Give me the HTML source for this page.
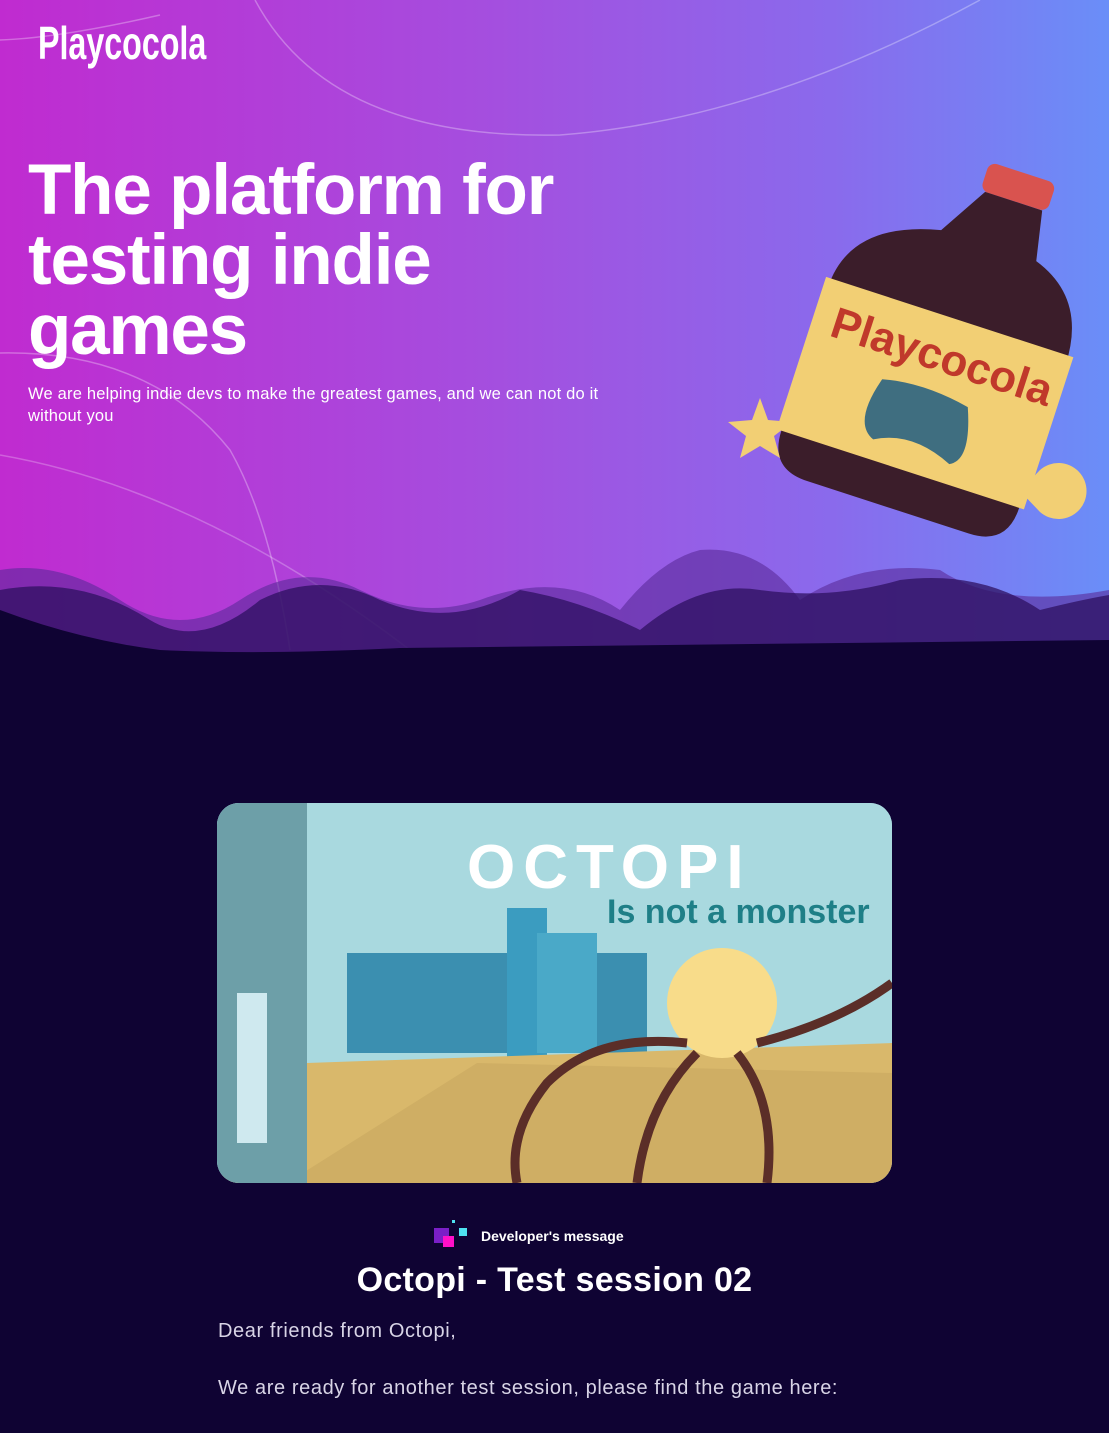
<!DOCTYPE html>
<html><head><meta charset="utf-8"><style>
*{margin:0;padding:0;box-sizing:border-box}
body{width:1109px;height:1433px;overflow:hidden;background:#0f0333;font-family:"Liberation Sans",sans-serif;position:relative}
.hero{position:absolute;left:0;top:0;width:1109px;height:660px;background:linear-gradient(90deg,#c02bd0 0%,#a44fdf 45%,#8a6aec 75%,#6a8ef8 100%)}
.logo{position:absolute;left:38px;top:16px;color:#fff;font-family:"Liberation Sans Narrow","Liberation Sans",sans-serif;font-size:46px;font-weight:bold;transform:scaleX(.7);transform-origin:left}
h1{position:absolute;left:28px;top:156px;color:#fff;font-size:71px;line-height:70px;font-weight:bold;letter-spacing:-1.2px;width:700px;white-space:nowrap}
.sub{position:absolute;left:28px;top:383px;color:#fff;font-size:16.5px;line-height:22px;width:600px;letter-spacing:.2px}
.card{position:absolute;left:217px;top:803px;width:675px;height:380px;border-radius:22px;overflow:hidden;background:#a9d9df}
.dm{position:absolute;left:481px;top:1228px;color:#fff;font-size:14px;font-weight:bold}
h2{position:absolute;left:0;width:1109px;text-align:center;top:1261px;color:#fff;font-size:34px;font-weight:bold;letter-spacing:.3px}
.p{position:absolute;left:218px;color:#d8d4e6;font-size:20px;letter-spacing:.6px}
</style></head><body>
<div class="hero">
<svg width="1109" height="660" style="position:absolute;left:0;top:0">
<path d="M255 0 Q330 140 560 135 Q760 120 980 0" fill="none" stroke="rgba(255,255,255,.3)" stroke-width="1.5"/>
<path d="M0 40 Q60 38 160 15" fill="none" stroke="rgba(255,255,255,.3)" stroke-width="1.5"/>
<path d="M0 353 Q150 350 230 450 Q270 520 290 650" fill="none" stroke="rgba(255,255,255,.3)" stroke-width="1.5"/>
<path d="M0 455 Q200 490 410 650" fill="none" stroke="rgba(255,255,255,.25)" stroke-width="1.5"/>
<path d="M0 570 Q60 560 120 600 Q180 640 240 600 Q300 560 360 590 Q420 620 480 600 Q560 570 620 610 Q660 560 700 550 Q760 545 800 600 Q860 560 940 570 Q1000 610 1109 590 L1109 660 L0 660Z" fill="#5a2a9a" opacity=".6"/>
<path d="M0 590 Q80 575 150 620 Q200 650 260 600 Q320 570 380 600 Q450 630 520 590 Q580 600 640 630 Q700 580 760 590 Q830 600 900 580 Q980 570 1040 610 Q1080 600 1109 595 L1109 660 L0 660Z" fill="#2e1060" opacity=".75"/>
<path d="M0 610 Q80 640 160 650 Q260 655 400 648 L1109 640 L1109 660 L0 660Z" fill="#0f0333"/>
</svg>
<div class="logo">Playcocola</div>
<h1>The platform for<br>testing indie<br>games</h1>
<div class="sub">We are helping indie devs to make the greatest games, and we can not do it without you</div>
<svg width="400" height="400" style="position:absolute;left:700px;top:140px" viewBox="0 0 400 400">
<g transform="rotate(18 220 220)">
<rect x="225" y="10" width="70" height="30" rx="8" fill="#d9534f"/>
<path d="M230 40 L290 40 L300 90 Q360 110 360 180 L360 330 Q360 370 320 370 L150 370 Q110 370 110 330 L110 180 Q110 110 200 90Z" fill="#3b1d2a"/>
<rect x="105" y="170" width="260" height="160" fill="#f2cf74"/>
<text x="125" y="225" font-size="44" font-weight="bold" fill="#c0392b" font-family="Liberation Sans Narrow,Liberation Sans,sans-serif">Playcocola</text>
<path d="M190 250 Q230 240 280 250 Q300 300 280 310 Q235 290 200 310 Q175 300 190 250Z" fill="#3f6e80"/>
</g>
<path d="M60 258 L68 280 L92 282 L74 296 L80 318 L60 306 L40 318 L46 296 L28 282 L52 280Z" fill="#f2cf74"/>
<path d="M340 330 A28 28 0 1 1 340 372 L320 351Z" fill="#f2cf74"/>
</svg>
</div>
<div class="card">
<svg width="675" height="380">
<rect width="675" height="380" fill="#a9d9df"/>
<rect x="130" y="150" width="300" height="100" fill="#3b8fb0"/>
<rect x="290" y="105" width="40" height="150" fill="#3b9cc0"/>
<rect x="320" y="130" width="60" height="120" fill="#4aa9c8"/>
<path d="M0 380 L90 260 L675 240 L675 380Z" fill="#d9b86b"/>
<path d="M70 380 L260 260 L675 270 L675 380Z" fill="#cfae64"/>
<rect x="0" y="0" width="90" height="380" fill="#6d9fa8"/>
<rect x="20" y="190" width="30" height="150" fill="#cfe9ef"/>
<text x="250" y="85" font-size="62" font-weight="bold" fill="#fff" letter-spacing="8">OCTOPI</text>
<text x="390" y="120" font-size="34" fill="#1e7f87" font-weight="bold">Is not a monster</text>
<ellipse cx="505" cy="200" rx="55" ry="55" fill="#f8dc8a"/>
<path d="M470 240 Q380 230 330 280 Q290 330 300 380 M480 250 Q430 300 420 380 M520 250 Q560 300 550 380 M540 240 Q620 220 675 180" fill="none" stroke="#5b2e28" stroke-width="9"/>
</svg>
</div>
<svg width="40" height="34" style="position:absolute;left:432px;top:1218px">
<rect x="2" y="10" width="15" height="15" fill="#7a1fc7"/>
<rect x="11" y="18" width="11" height="11" fill="#ff10c8"/>
<rect x="27" y="10" width="8" height="8" fill="#4fe2f0"/>
<rect x="20" y="2" width="3" height="3" fill="#4fe2f0"/>
</svg>
<div class="dm">Developer's message</div>
<h2>Octopi - Test session 02</h2>
<div class="p" style="top:1320px">Dear friends from Octopi,</div>
<div class="p" style="top:1377px">We are ready for another test session, please find the game here:</div>
</body></html>
